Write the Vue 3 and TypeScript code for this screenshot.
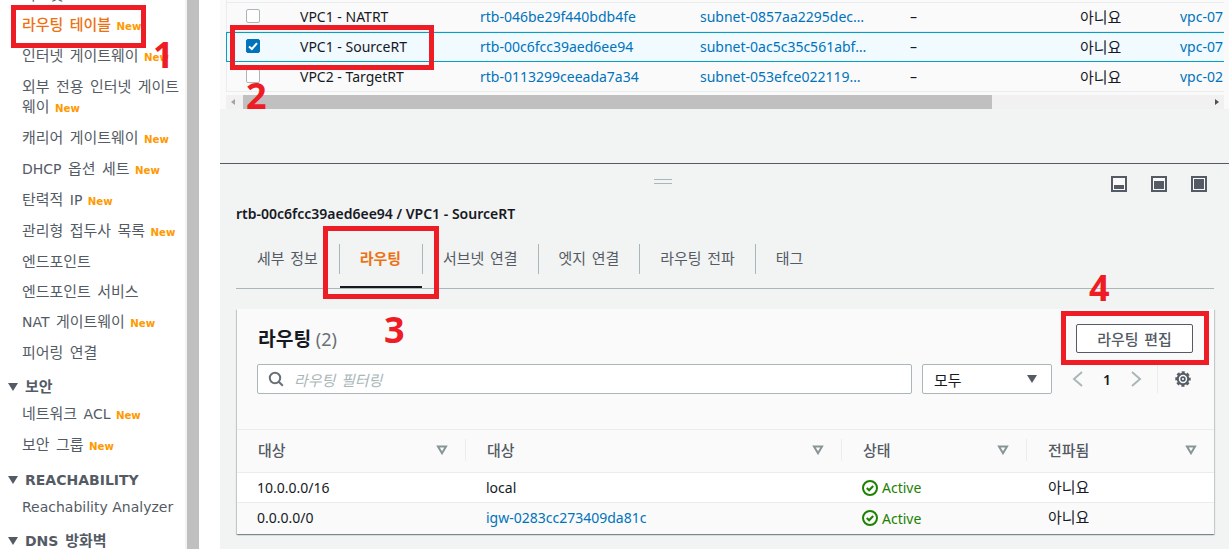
<script setup lang="ts">
import { h } from 'vue'
import type { FunctionalComponent } from 'vue'

// Hangul in the reference has a wider advance than the installed CJK face,
// so Hangul runs and the spaces between them get their own class.
const Ko: FunctionalComponent<{ t: string }> = (props) => {
  const t = props.t
  if (!/[가-힣]/.test(t)) return t
  return (t.match(/[가-힣]+|\s+|[^가-힣\s]+/g) ?? []).map((s) =>
    /[가-힣]/.test(s) ? h('span', { class: 'ko' }, s) : /\s/.test(s) ? h('span', { class: 'ko-sp' }, s) : s
  )
}
Ko.props = ['t']

interface NavItem { label: string; isNew?: boolean; active?: boolean }
interface NavGroup { title?: string; items: NavItem[] }
const navGroups: NavGroup[] = [
  { items: [
    { label: '서브넷' },
    { label: '라우팅 테이블', isNew: true, active: true },
    { label: '인터넷 게이트웨이', isNew: true },
    { label: '외부 전용 인터넷 게이트웨이', isNew: true },
    { label: '캐리어 게이트웨이', isNew: true },
    { label: 'DHCP 옵션 세트', isNew: true },
    { label: '탄력적 IP', isNew: true },
    { label: '관리형 접두사 목록', isNew: true },
    { label: '엔드포인트' },
    { label: '엔드포인트 서비스' },
    { label: 'NAT 게이트웨이', isNew: true },
    { label: '피어링 연결' }
  ] },
  { title: '보안', items: [ { label: '네트워크 ACL', isNew: true }, { label: '보안 그룹', isNew: true } ] },
  { title: 'REACHABILITY', items: [ { label: 'Reachability Analyzer' } ] },
  { title: 'DNS 방화벽', items: [] }
]
const topRows = [
  { name: 'VPC1 - NATRT', id: 'rtb-046be29f440bdb4fe', subnet: 'subnet-0857aa2295dec…', vpc: 'vpc-07', selected: false },
  { name: 'VPC1 - SourceRT', id: 'rtb-00c6fcc39aed6ee94', subnet: 'subnet-0ac5c35c561abf…', vpc: 'vpc-07', selected: true },
  { name: 'VPC2 - TargetRT', id: 'rtb-0113299ceeada7a34', subnet: 'subnet-053efce022119…', vpc: 'vpc-02', selected: false }
]
const tabs = ['세부 정보', '라우팅', '서브넷 연결', '엣지 연결', '라우팅 전파', '태그']
const heads = ['대상', '대상', '상태', '전파됨']
const routes = [
  { dest: '10.0.0.0/16', target: 'local', link: false },
  { dest: '0.0.0.0/0', target: 'igw-0283cc273409da81c', link: true }
]
</script>

<template>
  <div class="page">
    <aside class="nav">
      <section v-for="(g, gi) in navGroups" :key="gi" class="nav-group">
        <h3 v-if="g.title" class="nav-title"><span class="caret"></span><span><Ko :t="g.title" /></span></h3>
        <a v-for="it in g.items" :key="it.label" class="nav-item" :class="{ active: it.active }"><Ko :t="it.label" /> <b v-if="it.isNew" class="new">New</b></a>
      </section>
    </aside>
    <div class="gutter"><div class="bar"></div></div>

    <main class="main">
      <div class="top">
        <div class="top-table">
          <div v-for="r in topRows" :key="r.id" class="top-row" :class="{ selected: r.selected }">
            <span class="cb" :class="{ on: r.selected }">
              <svg v-if="r.selected" viewBox="0 0 14 14" width="14" height="14"><path d="M3 7.400 5.900 10 11 4.200" fill="none" stroke="#fff" stroke-width="2"/></svg>
            </span>
            <span class="c-name">{{ r.name }}</span>
            <a class="c-id link">{{ r.id }}</a>
            <a class="c-sub link">{{ r.subnet }}</a>
            <span class="c-dash">–</span>
            <span class="c-no"><Ko t="아니요" /></span>
            <a class="c-vpc link">{{ r.vpc }}</a>
          </div>
        </div>
        <div class="hscroll">
          <span class="arr l"></span>
          <div class="thumb"></div>
          <span class="arr r"></span>
        </div>
      </div>

      <div class="spacer"></div>

      <section class="panel">
        <div class="handle"></div>
        <div class="layout-icons">
          <svg viewBox="0 0 16 16" width="16" height="16"><rect x="1" y="1" width="14" height="14" fill="#fafafa" stroke="#545b64" stroke-width="2"/><rect x="3" y="9" width="10" height="4" fill="#545b64"/></svg>
          <svg viewBox="0 0 16 16" width="16" height="16"><rect x="1" y="1" width="14" height="14" fill="#fafafa" stroke="#545b64" stroke-width="2"/><rect x="3" y="5" width="10" height="8" fill="#545b64"/></svg>
          <svg viewBox="0 0 16 16" width="16" height="16"><rect x="1" y="1" width="14" height="14" fill="#fafafa" stroke="#545b64" stroke-width="2"/><rect x="3" y="3" width="10" height="10" fill="#545b64"/></svg>
        </div>
        <h2 class="res-title">rtb-00c6fcc39aed6ee94 / VPC1 - SourceRT</h2>
        <nav class="tabs">
          <a v-for="(t, i) in tabs" :key="t" class="tab" :class="{ current: i === 1 }"><span class="tab-label"><Ko :t="t" /></span></a>
        </nav>

        <div class="card">
          <header class="card-head">
            <h3 class="card-title"><Ko t="라우팅" /> <span class="count">(2)</span></h3>
            <button class="btn"><Ko t="라우팅 편집" /></button>
          </header>
          <div class="filters">
            <div class="search">
              <svg viewBox="0 0 16 16" width="16" height="16"><circle cx="7" cy="7" r="5.200" fill="none" stroke="#687078" stroke-width="2"/><path d="m10.800 10.800 4 4" stroke="#687078" stroke-width="2"/></svg>
              <span class="ph"><Ko t="라우팅 필터링" /></span>
            </div>
            <div class="select"><span><Ko t="모두" /></span><i class="sel-caret"></i></div>
            <div class="pager">
              <svg viewBox="0 0 12 16" width="12" height="16"><path d="M10 1 2 8l8 7" fill="none" stroke="#aab7b8" stroke-width="2"/></svg>
              <span class="pg">1</span>
              <svg viewBox="0 0 12 16" width="12" height="16"><path d="m2 1 8 7-8 7" fill="none" stroke="#aab7b8" stroke-width="2"/></svg>
            </div>
            <div class="gear">
              <svg viewBox="0 0 16 16" width="16" height="16"><circle cx="8" cy="8" r="5.200" fill="none" stroke="#545b64" stroke-width="2"/><circle cx="8" cy="8" r="6.800" fill="none" stroke="#545b64" stroke-width="1.800" stroke-dasharray="3.200 2.140" stroke-dashoffset="1.600"/><circle cx="8" cy="8" r="1.900" fill="none" stroke="#545b64" stroke-width="1.600"/></svg>
            </div>
          </div>

          <div class="thead">
            <div v-for="(h2, i) in heads" :key="i" class="th">
              <span><Ko :t="h2" /></span>
              <svg class="sort" viewBox="0 0 12 10" width="12" height="10"><path d="M2 1.500h8L6 8.200z" fill="#fafafa" stroke="#879596" stroke-width="2"/></svg>
            </div>
          </div>
          <div v-for="(r, ri) in routes" :key="r.dest" class="tr" :class="{ alt: ri === 1 }">
            <div class="td">{{ r.dest }}</div>
            <div class="td" :class="{ link: r.link }">{{ r.target }}</div>
            <div class="td status">
              <svg viewBox="0 0 16 16" width="16" height="16"><circle cx="8" cy="8" r="7" fill="none" stroke="#1d8102" stroke-width="2"/><path d="m4.800 8 2.300 2.300 4.100-4.300" fill="none" stroke="#1d8102" stroke-width="2"/></svg>
              Active
            </div>
            <div class="td last"><Ko t="아니요" /></div>
          </div>
        </div>
      </section>
    </main>

    <div class="mark m1"></div><span class="num n1">1</span>
    <div class="mark m2"></div><span class="num n2">2</span>
    <div class="mark m3"></div><span class="num n3">3</span>
    <div class="mark m4"></div><span class="num n4">4</span>
  </div>
</template>

<style>
html, body { margin: 0; background: #fff; overflow: hidden; }
.ko { font-size: 1.07em; }
.ko-sp { word-spacing: 2px; }
</style>

<style scoped>
.page {
  position: relative; display: flex; width: 1229px; height: 549px; overflow: hidden;
  background: #fff; color: #16191f;
  font-family: "Noto Sans", "Noto Sans CJK KR", sans-serif; font-size: 14px;
}
.nav { width: 185px; flex: none; margin-top: -20px; font-family: "DejaVu Sans", "Noto Sans CJK KR", sans-serif; }
.nav-title { margin: 0; padding: 9px 0 2px 8px; line-height: 20px; height: 20px; font-size: 14px; font-weight: 700; color: #545b64; display: flex; align-items: center; }
.caret { width: 0; height: 0; margin-right: 7px; border: 5px solid transparent; border-top: 8px solid #545b64; border-bottom: 0; }
.nav-item { display: block; padding: 5px 5px 5px 22px; line-height: 20px; font-size: 14px; color: #545b64; }
.nav-item.active { color: #ec7211; font-weight: 500; }
.new { font-size: 10.200px; line-height: 18px; font-weight: 700; color: #ff9900; margin-left: 1px; }
.gutter { width: 35px; flex: none; display: flex; }
.bar { width: 14px; box-sizing: border-box; border-left: 2px solid #f2f3f3; background: #c0c0c0; }

.main { flex: 1; min-width: 0; display: flex; flex-direction: column; background: #f2f3f3; }
.top { background: #fafafa; height: 109px; padding-left: 6px; padding-right: 5px; box-sizing: border-box; }
.top-table { padding-top: 2px; border-left: 1px solid #eaeded; }
.top-row { display: flex; align-items: center; height: 30px; padding-bottom: 2px; box-sizing: border-box; border-bottom: 1px solid #eaeded; overflow: hidden; color: #16191f; }
.top-row:first-child { border-top: 1px solid #eaeded; }
.top-row:last-child { padding-bottom: 1px; }
.top-row.selected { background: #f1faff; border-top: 1px solid #00a1c9; border-bottom: 1px solid #00a1c9; margin-left: -1px; border-left: 1px solid #00a1c9; }
.link { color: #0073bb; }
.cb { flex: none; width: 12px; height: 12px; margin-left: 19px; border: 1px solid #aab7b8; border-radius: 2px; background: #fff; display: flex; }
.cb svg { flex: none; margin: -1px; }
.cb.on { background: #0073bb; border-color: #0073bb; }
.c-name { flex: none; width: 180px; margin-left: 40px; }
.c-id { flex: none; width: 220px; }
.c-sub { flex: none; width: 210px; }
.c-dash { flex: none; width: 170px; }
.c-no { flex: none; width: 100px; }
.c-vpc { flex: none; }
.hscroll { display: flex; align-items: center; height: 14px; margin-top: 3px; background: #f1f1f1; position: relative; }
.thumb { width: 749px; height: 14px; margin-left: 17px; background: #c0c0c0; }
.arr { position: absolute; top: 4px; width: 0; height: 0; border: 3.500px solid transparent; }
.arr.l { left: 5px; border-right: 4px solid #a3a3a3; border-left: 0; }
.arr.r { right: 5px; border-left: 4px solid #505050; border-right: 0; }

.spacer { height: 54px; flex: none; }
.panel { flex: 1; position: relative; border-top: 1px solid #545b64; padding: 12px 15px 0 16px; min-height: 0; }
.handle { position: absolute; left: 434px; top: 15px; width: 18px; height: 3px; border-top: 1px solid #aab7b8; border-bottom: 1px solid #aab7b8; }
.layout-icons { display: flex; justify-content: flex-end; gap: 24px; padding-right: 7px; height: 16px; }
.res-title { margin: 12px 0 0; font-size: 14px; line-height: 20px; font-weight: 600; color: #16191f; }
.tabs { display: flex; height: 65px; border-bottom: 1px solid #aab7b8; box-sizing: border-box; padding-top: 10px; }
.tab { display: flex; align-items: center; height: 54px; position: relative; color: #545b64; padding: 0 21px; }
.tab:nth-child(n+3) { padding-right: 20px; }
.tab-label { font-size: 14px; line-height: 20px; margin-top: -6px; }
.tab + .tab::before { content: ""; position: absolute; left: 0; top: 10px; height: 30px; width: 1px; background: #aab7b8; }
.tab.current { color: #ec7211; font-weight: 600; }
.tab.current::after { content: ""; position: absolute; left: 1px; right: 0; bottom: 0; height: 2px; background: #16191f; }

.card { margin: 20px 0 0 1px; height: 225px; background: #fafafa; box-shadow: 0 1px 1px 0 rgba(0,28,36,.3), 1px 1px 1px 0 rgba(0,28,36,.15), -1px 1px 1px 0 rgba(0,28,36,.15); }
.card-head { display: flex; justify-content: space-between; align-items: flex-start; padding: 15px 21px 0 21px; height: 55px; box-sizing: border-box; }
.card-title { margin: 4px 0 0; font-size: 18px; line-height: 22px; font-weight: 700; color: #16191f; }
.count { font-weight: 400; color: #687078; }
.btn { width: 117px; height: 29px; background: #fff; border: 1px solid #545b64; border-radius: 2px; color: #545b64; font: inherit; font-size: 14px; font-weight: 500; padding: 0; }
.filters { display: flex; align-items: center; padding-left: 20px; height: 30px; }
.search { width: 655px; height: 30px; box-sizing: border-box; background: #fff; border: 1px solid #aab7b8; border-radius: 2px; display: flex; align-items: center; padding-left: 10px; gap: 10px; }
.ph { font-style: italic; color: #aab7b8; }
.select { width: 130px; height: 30px; box-sizing: border-box; margin-left: 10px; background: #fff; border: 1px solid #aab7b8; border-radius: 2px; display: flex; align-items: center; justify-content: space-between; padding: 0 14px 0 11px; }
.sel-caret { width: 0; height: 0; border: 5px solid transparent; border-width: 8px 5.500px 0; border-top-color: #545b64; }
.pager { display: flex; align-items: center; margin-left: 20px; width: 85px; box-sizing: border-box; gap: 19px; color: #16191f; }
.pg { font-weight: 600; width: 8px; text-align: center; }
.gear { height: 28px; width: 50px; box-sizing: border-box; border-left: 1px solid #eaeded; display: flex; align-items: center; justify-content: center; }
.thead { display: grid; grid-template-columns: 229px 376px 185px 1fr; margin-top: 35px; height: 44px; border-top: 1px solid #eaeded; border-bottom: 1px solid #eaeded; box-sizing: border-box; }
.th { display: flex; align-items: center; justify-content: space-between; height: 22px; margin-top: 9px; padding: 0 17px 0 21px; color: #545b64; border-right: 1px solid #eaeded; font-weight: 500; }
.th:last-child { border-right: 0; }
.th span { margin-top: -2px; }
.tr { display: grid; grid-template-columns: 229px 376px 185px 1fr; height: 30px; background: #fff; border-bottom: 1px solid #eaeded; box-sizing: border-box; }
.tr.alt { background: #fafafa; border-bottom: 0; }
.td { padding-left: 20px; line-height: 29px; color: #16191f; }
.td.link { color: #0073bb; }
.td.last { padding-left: 21px; }
.td.status { display: flex; align-items: center; gap: 4px; color: #1d8102; }

.mark { position: absolute; box-sizing: border-box; border: 5px solid #ee1c25; pointer-events: none; }
.m1 { left: 11px; top: 5px; width: 135px; height: 43px; }
.m2 { left: 230px; top: 25px; width: 204px; height: 45px; }
.m3 { left: 323px; top: 226px; width: 116px; height: 73px; }
.m4 { left: 1061px; top: 311px; width: 148px; height: 54px; }
.num { position: absolute; color: #ee1c25; font-family: "Open Sans", sans-serif; font-weight: 700; font-size: 36px; line-height: 36px; }
.n1 { left: 153px; top: 37px; }
.n2 { left: 246px; top: 78px; }
.n3 { left: 384px; top: 312px; }
.n4 { left: 1089px; top: 270px; }
</style>
